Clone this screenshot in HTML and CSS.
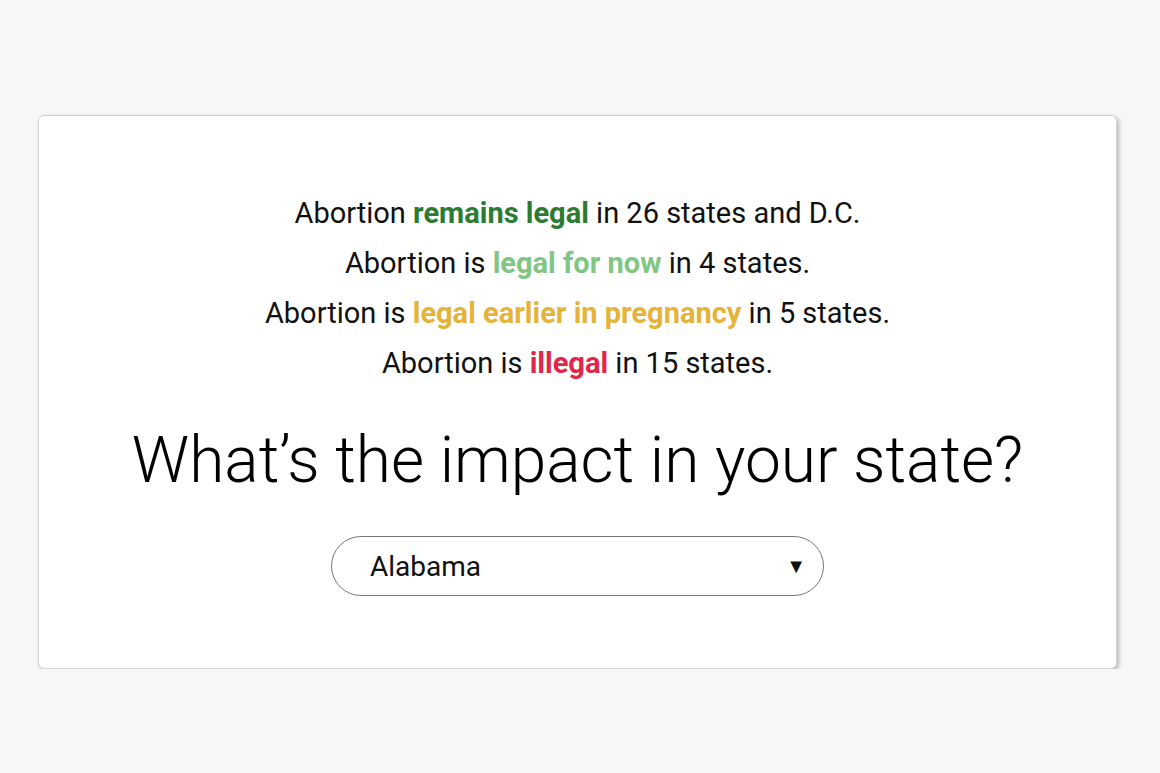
FILE: index.html
```html
<!DOCTYPE html>
<html lang="en">
<head>
    <meta charset="UTF-8">
    <meta name="viewport" content="width=device-width, initial-scale=1.0">
    <title>Abortion law by state</title>
    <link rel="stylesheet" href="styles.css">
</head>
<body>
    <div class="card">
        <!-- Summary lines -->
        <div class="summary">
            <p>Abortion <strong class="status-legal">remains legal</strong> in 26 states and D.C.</p>
            <p>Abortion is <strong class="status-now">legal for now</strong> in 4 states.</p>
            <p>Abortion is <strong class="status-early">legal earlier in pregnancy</strong> in 5 states.</p>
            <p>Abortion is <strong class="status-illegal">illegal</strong> in 15 states.</p>
        </div>

        <h1 class="question">What’s the impact in your state?</h1>

        <div class="state-select">
            <span class="state-name">Alabama</span>
            <span class="arrow">▼</span>
        </div>
    </div>
</body>
</html>
```

FILE: styles.css
```css
* {
    margin: 0;
    padding: 0;
    box-sizing: border-box;
}

body {
    font-family: Roboto, "Liberation Sans", sans-serif;
    background: #f7f7f7;
    color: #111;
    padding-top: 115px;
}

.card {
    margin-left: 38px;
    width: 1079px;
    height: 554px;
    background: #fff;
    border: 1px solid #d4d4d4;
    border-radius: 6px;
    box-shadow: 2px 2px 4px rgba(0, 0, 0, 0.25);
    padding-top: 72px;
    display: flex;
    flex-direction: column;
    align-items: center;
    text-align: center;
}

.summary p {
    font-size: 29px;
    line-height: 50px;
}

.summary strong {
    font-weight: 700;
}

.status-legal {
    color: #2b7b30;
}

.status-now {
    color: #80c683;
}

.status-early {
    color: #e5b33a;
}

.status-illegal {
    color: #e2264a;
}

.question {
    font-size: 64px;
    font-weight: 300;
    line-height: 70px;
    margin-top: 38px;
    color: #000;
}

.state-select {
    margin-top: 40px;
    width: 493px;
    height: 60px;
    border: 1px solid #777;
    border-radius: 30px;
    display: flex;
    align-items: center;
    justify-content: space-between;
    padding: 0 17px 0 38px;
}

.state-name {
    font-size: 28px;
}

.arrow {
    font-size: 20px;
}
```
